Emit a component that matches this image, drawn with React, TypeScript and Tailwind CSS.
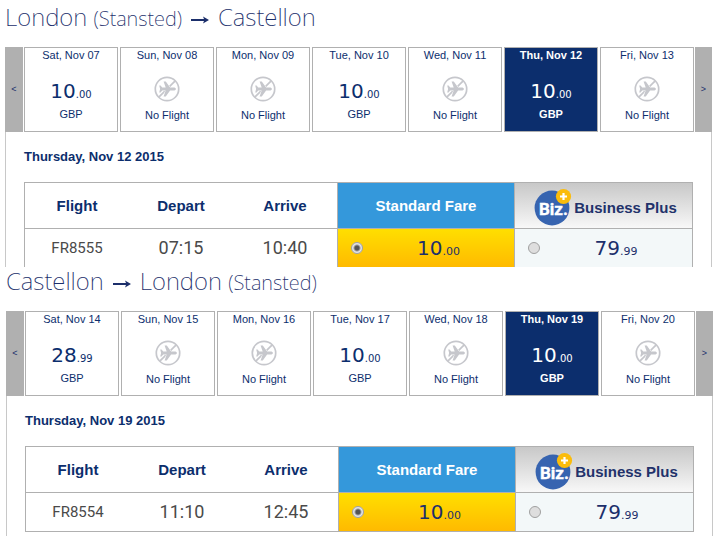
import React from 'react';

type Day = { label: string; whole?: string; cents?: string; selected?: boolean };

type Trip = {
  id: string;
  title: React.ReactNode;
  days: Day[];
  date: string;
  flight: string;
  depart: string;
  arrive: string;
};

const Arrow = () => (
  <svg className="mx-2 inline-block" width="20" height="10" viewBox="0 0 20 10" aria-hidden="true">
    <path d="M1 5h14" stroke="#1c2f6b" strokeWidth="2" />
    <path d="M13 1.5 19 5l-6 3.5 1.4-3.5z" fill="#1c2f6b" />
  </svg>
);

const Stansted = () => <span className="text-xl">(Stansted)</span>;

const trips: Trip[] = [
  {
    id: 'outbound',
    title: (
      <>
        London <Stansted />
        <Arrow />
        Castellon
      </>
    ),
    days: [
      { label: 'Sat, Nov 07', whole: '10', cents: '.00' },
      { label: 'Sun, Nov 08' },
      { label: 'Mon, Nov 09' },
      { label: 'Tue, Nov 10', whole: '10', cents: '.00' },
      { label: 'Wed, Nov 11' },
      { label: 'Thu, Nov 12', whole: '10', cents: '.00', selected: true },
      { label: 'Fri, Nov 13' },
    ],
    date: 'Thursday, Nov 12 2015',
    flight: 'FR8555',
    depart: '07:15',
    arrive: '10:40',
  },
  {
    id: 'inbound',
    title: (
      <>
        Castellon
        <Arrow />
        London <Stansted />
      </>
    ),
    days: [
      { label: 'Sat, Nov 14', whole: '28', cents: '.99' },
      { label: 'Sun, Nov 15' },
      { label: 'Mon, Nov 16' },
      { label: 'Tue, Nov 17', whole: '10', cents: '.00' },
      { label: 'Wed, Nov 18' },
      { label: 'Thu, Nov 19', whole: '10', cents: '.00', selected: true },
      { label: 'Fri, Nov 20' },
    ],
    date: 'Thursday, Nov 19 2015',
    flight: 'FR8554',
    depart: '11:10',
    arrive: '12:45',
  },
];

const NoFlightIcon = () => (
  <svg className="mx-auto" width="26" height="26" viewBox="0 0 26 26" aria-hidden="true">
    <circle cx="13" cy="13" r="11.7" fill="none" stroke="#c6c7cc" strokeWidth="1.7" />
    <path d="M4.8 21.2 21.2 4.8" stroke="#c6c7cc" strokeWidth="1.7" />
    <path
      d="M22 13c0-.9-1.2-1.5-2.3-1.5h-3.6L11.8 5.5H9.6l2.1 6H8.2L6.6 9.4H5.2L6.1 13l-.9 3.6h1.4l1.6-2.1h3.5l-2.1 6h2.2l4.3-6h3.6c1.1 0 2.3-.6 2.3-1.5z"
      fill="#c6c7cc"
      stroke="#fff"
      strokeWidth="1"
      paintOrder="stroke"
    />
  </svg>
);

const BizLogo = () => (
  <svg className="inline-block" width="38" height="38" viewBox="0 0 38 38" aria-hidden="true">
    <circle cx="18" cy="20" r="17.4" fill="#3764b0" />
    <text
      x="5"
      y="27"
      fontSize="17"
      fontWeight="700"
      fontFamily="Roboto, sans-serif"
      fill="#fff"
      stroke="#fff"
      strokeWidth="0.4"
    >
      Biz.
    </text>
    <circle cx="29.5" cy="8.5" r="7.6" fill="#fbbc0c" />
    <path d="M29.5 5v7M26 8.5h7" stroke="#fff" strokeWidth="2.2" />
  </svg>
);

const DayCard = ({ day }: { day: Day }) => (
  <button
    type="button"
    className={`flex h-[85px] flex-1 flex-col items-center border border-[#b0b0b0] text-[11px] ${
      day.selected ? 'bg-[#0c2e6d] text-white' : 'bg-white text-[#0c2e6d]'
    }`}
  >
    <span className={`leading-[14px] ${day.selected ? 'font-bold' : ''}`}>{day.label}</span>
    {day.whole ? (
      <>
        <span className="mt-[17px] font-['DejaVu_Sans'] text-xl leading-6">
          {day.whole}
          <span className="text-[10px]">{day.cents}</span>
        </span>
        <span className={`leading-[14px] ${day.selected ? 'font-bold' : ''}`}>GBP</span>
      </>
    ) : (
      <>
        <span className="mt-[14px]">
          <NoFlightIcon />
        </span>
        <span className="mt-[6px] leading-[14px]">No Flight</span>
      </>
    )}
  </button>
);

type FareProps = { trip: string; name: string; whole: string; cents: string; checked?: boolean };

const Fare = ({ trip, name, whole, cents, checked }: FareProps) => (
  <label className="flex items-center pl-[13px] text-[#1c2f6b]">
    <input
      type="radio"
      name={trip}
      aria-label={name}
      defaultChecked={checked}
      className="size-3 appearance-none rounded-full border border-[#a0a0a0] bg-[#dedede] checked:bg-[radial-gradient(circle,#555_2px,#e4e4e4_4px)]"
    />
    <span className="flex-1 pt-1 text-center font-['DejaVu_Sans'] text-xl leading-6">
      {whole}
      <span className="text-[11px]">{cents}</span>
    </span>
  </label>
);

const stepClass = 'shrink-0 bg-[#b0b0b0] text-[9px] text-[#1c2f6b]';

const TripSection = ({ trip }: { trip: Trip }) => (
  <>
    <h2 className="h-11 font-['Noto_Sans'] text-2xl leading-7 font-extralight text-[#1c2f6b]">{trip.title}</h2>
    <div className="flex justify-between">
      <button type="button" className={`w-[18px] ${stepClass}`}>
        &lt;
      </button>
      <div className="mx-px flex flex-1 gap-0.5">
        {trip.days.map((day) => (
          <DayCard key={day.label} day={day} />
        ))}
      </div>
      <button type="button" className={`w-[17px] ${stepClass}`}>
        &gt;
      </button>
    </div>
    <div className="border-x border-[#c8c8c8] px-[18px] pb-1">
      <h3 className="py-[17px] text-[13px] leading-4 font-bold text-[#0c2e6d]">{trip.date}</h3>
      <table className="w-full table-fixed border-separate border-spacing-0 border-t border-l border-[#b0b0b0] text-center">
        <thead>
          <tr className="h-[46px] text-[15px] text-[#0c2e6d] *:border-b *:border-[#b0b0b0] *:px-0 *:pt-0.5 *:pb-0">
            <th className="w-[104px]">Flight</th>
            <th className="w-[104px]">Depart</th>
            <th className="w-[105px] border-r">Arrive</th>
            <th className="w-[177px] border-r bg-[#3498db] text-white">Standard Fare</th>
            <th className="border-r bg-linear-to-b from-[#c8c8c8] to-[#f8f8f8] text-[#22326b]">
              <span className="flex items-center justify-center gap-0.5 pl-1">
                <BizLogo />
                <span className="pt-1">Business Plus</span>
              </span>
            </th>
          </tr>
        </thead>
        <tbody>
          <tr className="h-[39px] font-['Roboto'] text-[#4a4a4a] *:border-b *:border-[#b0b0b0] *:py-0">
            <td className="text-[15px]">{trip.flight}</td>
            <td className="text-lg leading-6">{trip.depart}</td>
            <td className="border-r text-lg leading-6">{trip.arrive}</td>
            <td className="border-r bg-linear-to-b from-[#ffdf00] to-[#ffba00]">
              <Fare trip={trip.id} name="Standard Fare" whole="10" cents=".00" checked />
            </td>
            <td className="border-r bg-[#f3f8f9]">
              <Fare trip={trip.id} name="Business Plus" whole="79" cents=".99" />
            </td>
          </tr>
        </tbody>
      </table>
    </div>
  </>
);

const App: React.FC = () => {
  const [outbound, inbound] = trips;
  return (
    <main className="bg-white font-['Liberation_Sans',Arial,sans-serif]">
      {/* Outbound list is cut off under its first row */}
      <section className="max-h-[267px] overflow-hidden pt-[3px] pr-0.5 pl-[5px]">
        <TripSection trip={outbound} />
      </section>
      <section className="pr-px pl-1.5">
        <TripSection trip={inbound} />
      </section>
    </main>
  );
};

export default App;
